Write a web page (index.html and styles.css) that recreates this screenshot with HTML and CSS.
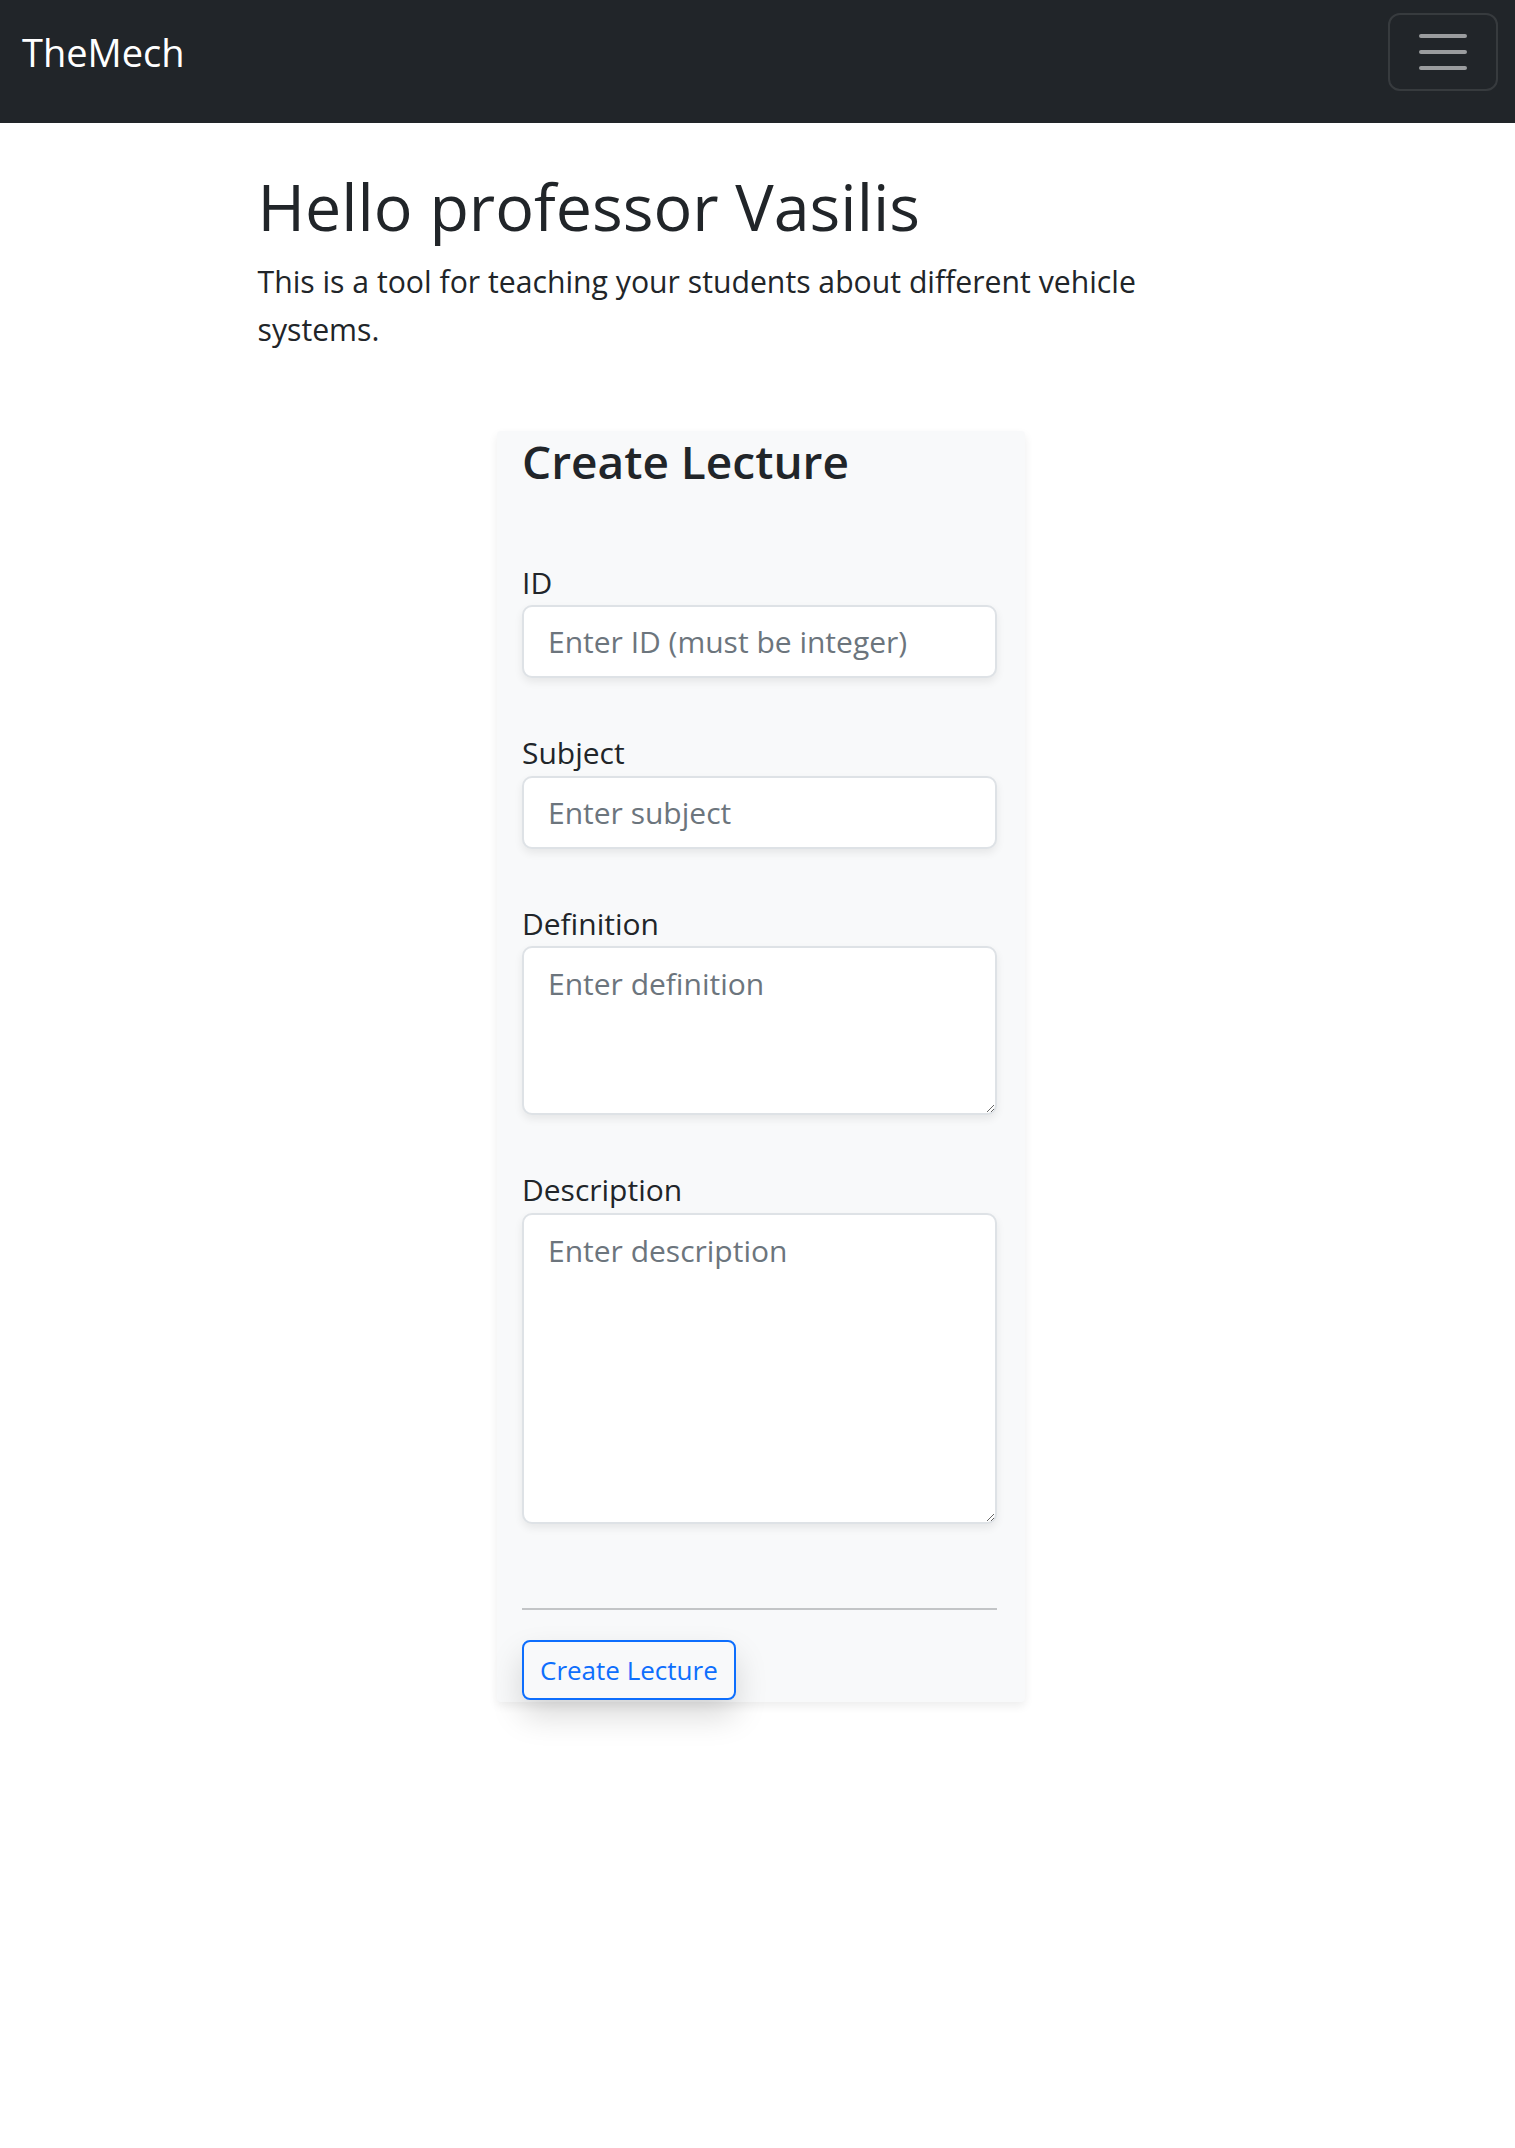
FILE: index.html
```html
<!DOCTYPE html>
<html lang="en">
<head>
<meta charset="utf-8">
<title>TheMech</title>
<link rel="stylesheet" href="styles.css">
</head>
<body>
<nav class="navbar">
  <a class="brand" href="#">TheMech</a>
  <button class="toggler" type="button" aria-label="Toggle navigation">
    <svg class="toggler-icon" viewBox="0 0 30 30" width="60" height="60">
      <path d="M4 7h22M4 15h22M4 23h22" stroke="rgba(255,255,255,0.55)" stroke-width="2" stroke-linecap="round" stroke-miterlimit="10" fill="none"/>
    </svg>
  </button>
</nav>

<main class="container">
  <section class="intro">
    <h1 class="title">Hello professor Vasilis</h1>
    <p class="lead">This is a tool for teaching your students about different vehicle systems.</p>
  </section>

  <form class="card">
    <h3 class="card-title">Create Lecture</h3>
    <div class="group">
      <label class="label" for="id">ID</label>
      <input class="control" id="id" type="text" placeholder="Enter ID (must be integer)">
    </div>
    <div class="group">
      <label class="label" for="subject">Subject</label>
      <input class="control" id="subject" type="text" placeholder="Enter subject">
    </div>
    <div class="group">
      <label class="label" for="definition">Definition</label>
      <textarea class="control area-def" id="definition" placeholder="Enter definition"></textarea>
    </div>
    <div class="group group-last">
      <label class="label" for="description">Description</label>
      <textarea class="control area-desc" id="description" placeholder="Enter description"></textarea>
    </div>
    <hr class="divider">
    <button class="btn-outline" type="button">Create Lecture</button>
  </form>
</main>
</body>
</html>
```

FILE: styles.css
```css
html, body {
  margin: 0;
  padding: 0;
  background: #ffffff;
}

body {
  font-family: "Open Sans", "Noto Sans", sans-serif;
  color: #212529;
}

/* Navbar */
.navbar {
  box-sizing: border-box;
  height: 123px;
  background: #212529;
  display: flex;
  align-items: flex-start;
  justify-content: space-between;
  padding: 13px 17px 0 22px;
}

.brand {
  font-size: 38px;
  line-height: 78px;
  color: #ffffff;
  text-decoration: none;
}

.toggler {
  box-sizing: border-box;
  width: 110px;
  height: 78px;
  padding: 7px 23px;
  background: transparent;
  border: 2px solid rgba(255, 255, 255, 0.1);
  border-radius: 12px;
  display: flex;
  align-items: center;
  justify-content: center;
}

.toggler-icon {
  display: block;
  width: 60px;
  height: 60px;
}

/* Page */
.container {
  box-sizing: border-box;
  width: 1080px;
  margin: 0 auto;
  padding: 0 24px 80px;
}

.intro {
  padding: 0 16px;
}

.title {
  margin: 45px 0 13px;
  font-size: 64.5px;
  font-weight: 500;
  line-height: 1.2;
}

.lead {
  margin: 0;
  max-width: 930px;
  font-size: 30.2px;
  line-height: 48px;
}

/* Card */
.card {
  box-sizing: border-box;
  width: 528px;
  margin: 77px 0 0 255.5px;
  padding: 3px 28px 2px 25px;
  background: #f8f9fa;
  border-radius: 4px;
  box-shadow: 0 4px 10px rgba(0, 0, 0, 0.075);
  display: flex;
  flex-direction: column;
  align-items: stretch;
}

.card-title {
  margin: 0 0 68px;
  font-size: 46px;
  font-weight: 600;
  line-height: 1.2;
}

.group {
  display: flex;
  flex-direction: column;
  margin-bottom: 50px;
}

.group-last {
  margin-bottom: 84px;
}

.label {
  font-size: 30px;
  line-height: 45px;
  padding-top: 2px;
  margin-bottom: 0.5px;
}

.control {
  box-sizing: border-box;
  display: block;
  width: 100%;
  height: 73px;
  margin: 0;
  padding: 12px 24px;
  font-family: "Open Sans", "Noto Sans", sans-serif;
  font-size: 30px;
  line-height: 45px;
  color: #212529;
  background: #ffffff;
  border: 2px solid #dee2e6;
  border-radius: 10px;
  box-shadow: 0 4px 8px rgba(0, 0, 0, 0.075);
  outline: none;
}

.control::placeholder {
  color: #6c757d;
  opacity: 1;
}

.area-def {
  height: 169px;
  padding-top: 13px;
}

.area-desc {
  height: 311px;
  padding-top: 13px;
}

.divider {
  width: 100%;
  margin: 0 0 30px;
  border: 0;
  border-top: 2px solid #c3c5c7;
}

.btn-outline {
  align-self: flex-start;
  box-sizing: border-box;
  height: 60px;
  padding: 0 16px;
  font-family: "Open Sans", "Noto Sans", sans-serif;
  font-size: 26px;
  line-height: 42px;
  color: #0d6efd;
  background: transparent;
  border: 2px solid #0d6efd;
  border-radius: 8px;
  box-shadow: 0 16px 32px rgba(0, 0, 0, 0.15);
  cursor: pointer;
}
```
